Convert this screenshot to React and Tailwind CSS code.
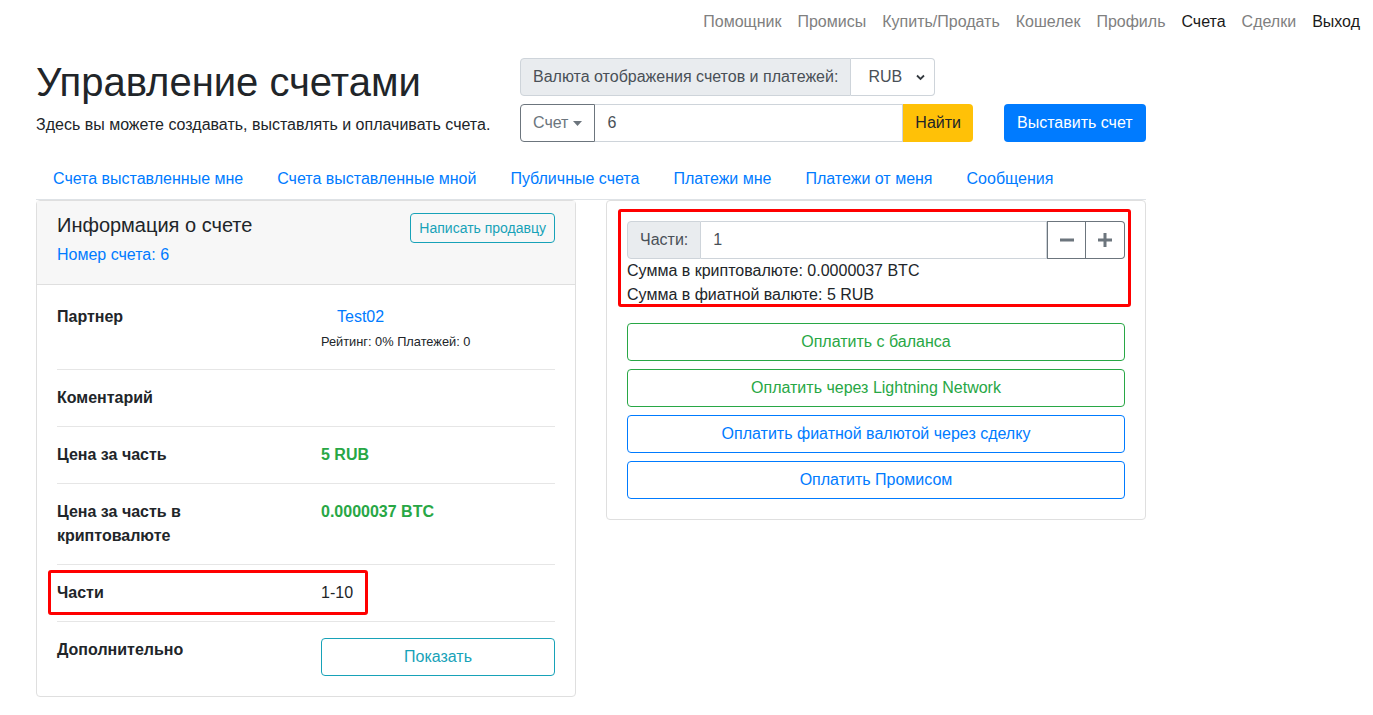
import React, { useState } from 'react';

const navLinks = [
  { label: 'Помощник' },
  { label: 'Промисы' },
  { label: 'Купить/Продать' },
  { label: 'Кошелек' },
  { label: 'Профиль' },
  { label: 'Счета', active: true },
  { label: 'Сделки' },
  { label: 'Выход', active: true },
];

const tabs = [
  'Счета выставленные мне',
  'Счета выставленные мной',
  'Публичные счета',
  'Платежи мне',
  'Платежи от меня',
  'Сообщения',
];

function InfoRow({ label, children, className = '' }) {
  return (
    <div className={`relative flex border-b border-[#e6e6e6] py-4 ${className}`}>
      <div className="w-[264px] shrink-0 pr-[30px] font-bold leading-6">{label}</div>
      <div className="flex-1 leading-6">{children}</div>
    </div>
  );
}

export default function App() {
  const [parts, setParts] = useState(1);

  return (
    <div className="min-h-screen bg-white text-[#212529] text-base" style={{ fontFamily: '"Liberation Sans", Arial, sans-serif' }}>
      {/* Top nav */}
      <nav className="flex justify-end pr-[5px] pt-[10px] h-[42px]">
        {navLinks.map((l) => (
          <a
            key={l.label}
            href="#"
            className={`px-2 leading-6 ${l.active ? 'text-[#1a1a1a]' : 'text-[#808080]'}`}
          >
            {l.label}
          </a>
        ))}
      </nav>

      <div className="pl-[36px] w-[1146px]">
        {/* Header */}
        <div className="flex mt-[16px]">
          <div className="w-[484px] shrink-0">
            <h1 className="text-[40px] leading-[48px] font-light">Управление счетами</h1>
            <p className="mt-[7px] leading-6">Здесь вы можете создавать, выставлять и оплачивать счета.</p>
          </div>
          <div className="flex-1">
            <div className="flex w-[415px] h-[38px]">
              <span className="flex items-center px-3 bg-[#e9ecef] border border-[#ced4da] rounded-l text-[#495057]">
                Валюта отображения счетов и платежей:
              </span>
              <div className="flex flex-1 items-center justify-between pl-[17px] pr-[9px] border border-l-0 border-[#ced4da] rounded-r text-[#495057]">
                <span>RUB</span>
                <svg width="9" height="7" viewBox="0 0 9 7">
                  <path d="M1 1.5 L4.5 5 L8 1.5" fill="none" stroke="#343a40" strokeWidth="1.8" />
                </svg>
              </div>
            </div>
            <div className="flex mt-2 h-[38px]">
              <div className="flex w-[453px]">
                <button className="flex items-center gap-[5px] px-3 border border-[#6c757d] rounded-l text-[#6c757d]">
                  Счет
                  <svg width="9" height="5" viewBox="0 0 9 5">
                    <path d="M0 0 L9 0 L4.5 5 Z" fill="#6c757d" />
                  </svg>
                </button>
                <div className="flex flex-1 items-center px-3 border border-l-0 border-[#ced4da] text-[#495057]">6</div>
                <button className="px-3 bg-[#ffc107] rounded-r text-[#212529]">Найти</button>
              </div>
              <button className="ml-[31px] px-[13px] bg-[#007bff] rounded text-white">Выставить счет</button>
            </div>
          </div>
        </div>

        {/* Tabs */}
        <ul className="flex mt-4 border-b border-[#dee2e6]">
          {tabs.map((t) => (
            <li key={t} className="-mb-px">
              <a href="#" className="block px-4 py-2 leading-6 border border-transparent text-[#007bff]">{t}</a>
            </li>
          ))}
        </ul>

        <div className="flex items-start gap-[30px]">
          {/* Left card */}
          <div className="w-[540px] border border-[#dfdfdf] rounded">
            <div className="flex justify-between items-start px-5 pt-3 pb-[9px] bg-[#f7f7f7] border-b border-[#dfdfdf]">
              <div>
                <h5 className="text-xl leading-6 mb-[6px]">Информация о счете</h5>
                <p className="leading-6 mb-2 text-[#007bff]">Номер счета: 6</p>
              </div>
              <button className="h-[30px] px-2 text-sm border border-[#17a2b8] text-[#17a2b8] rounded">
                Написать продавцу
              </button>
            </div>
            <div className="p-5">
              <InfoRow label="Партнер" className="pt-0 pb-[18px]">
                <a href="#" className="block pl-4 text-[#007bff]">Test02</a>
                <div className="mt-[3px] text-[12.8px] leading-[19px]">Рейтинг: 0% Платежей: 0</div>
              </InfoRow>
              <InfoRow label="Коментарий" />
              <InfoRow label="Цена за часть">
                <span className="font-bold text-[#28a745]">5 RUB</span>
              </InfoRow>
              <InfoRow label="Цена за часть в криптовалюте">
                <span className="font-bold text-[#28a745]">0.0000037 BTC</span>
              </InfoRow>
              <InfoRow label="Части">
                1-10
                <div className="absolute left-[-9px] top-[5px] w-[320px] h-[45px] border-[3px] border-[#ff0000] rounded-[3px] pointer-events-none" />
              </InfoRow>
              <div className="flex pt-4">
                <div className="w-[264px] shrink-0 font-bold leading-6">Дополнительно</div>
                <button className="flex-1 h-[38px] border border-[#17a2b8] text-[#17a2b8] rounded">Показать</button>
              </div>
            </div>
          </div>

          {/* Right card */}
          <div className="w-[540px] border border-[#dfdfdf] rounded p-5">
            <div className="relative">
              <div className="flex h-[38px]">
                <span className="flex items-center px-3 bg-[#e9ecef] border border-[#ced4da] rounded-l text-[#495057]">
                  Части:
                </span>
                <div className="flex flex-1 items-center px-3 border border-l-0 border-[#ced4da] text-[#495057]">{parts}</div>
                <button
                  onClick={() => setParts(Math.max(1, parts - 1))}
                  className="flex items-center justify-center w-[39px] border border-[#6c757d]"
                >
                  <svg width="14" height="14" viewBox="0 0 14 14">
                    <rect x="0" y="5.5" width="14" height="3" fill="#6c757d" />
                  </svg>
                </button>
                <button
                  onClick={() => setParts(Math.min(10, parts + 1))}
                  className="flex items-center justify-center w-[39px] border border-l-0 border-[#6c757d] rounded-r"
                >
                  <svg width="14" height="14" viewBox="0 0 14 14">
                    <rect x="0" y="5.5" width="14" height="3" fill="#6c757d" />
                    <rect x="5.5" y="0" width="3" height="14" fill="#6c757d" />
                  </svg>
                </button>
              </div>
              <div className="leading-6">Сумма в криптовалюте: 0.0000037 BTC</div>
              <div className="leading-6">Сумма в фиатной валюте: 5 RUB</div>
              <div className="absolute left-[-9px] top-[-12px] right-[-6px] bottom-[0px] border-[3px] border-[#ff0000] rounded-[3px] pointer-events-none" />
            </div>
            <div className="flex flex-col gap-2 mt-4">
              <button className="h-[38px] border border-[#28a745] text-[#28a745] rounded">Оплатить с баланса</button>
              <button className="h-[38px] border border-[#28a745] text-[#28a745] rounded">Оплатить через Lightning Network</button>
              <button className="h-[38px] border border-[#007bff] text-[#007bff] rounded">Оплатить фиатной валютой через сделку</button>
              <button className="h-[38px] border border-[#007bff] text-[#007bff] rounded">Оплатить Промисом</button>
            </div>
          </div>
        </div>
      </div>
    </div>
  );
}
